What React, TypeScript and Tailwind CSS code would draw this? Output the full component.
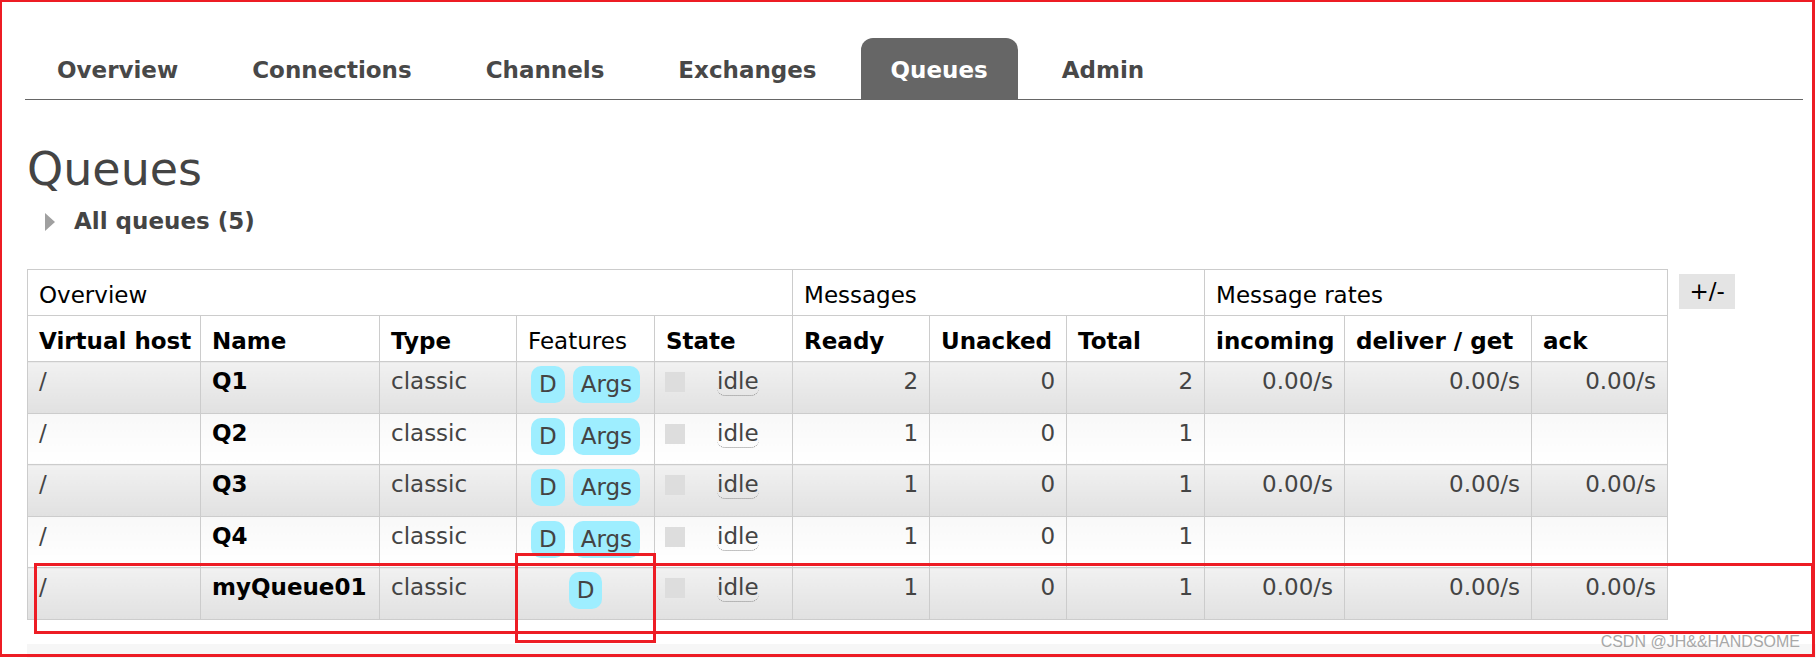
import React from "react";

const tabs = ["Overview", "Connections", "Channels", "Exchanges", "Queues", "Admin"];

type Fila = {
  nome: string;
  args: boolean;
  ready: number;
  unacked: number;
  total: number;
  taxas: boolean;
};

const filas: Fila[] = [
  { nome: "Q1", args: true, ready: 2, unacked: 0, total: 2, taxas: true },
  { nome: "Q2", args: true, ready: 1, unacked: 0, total: 1, taxas: false },
  { nome: "Q3", args: true, ready: 1, unacked: 0, total: 1, taxas: true },
  { nome: "Q4", args: true, ready: 1, unacked: 0, total: 1, taxas: false },
  { nome: "myQueue01", args: false, ready: 1, unacked: 0, total: 1, taxas: true },
];

const larguras = [173, 179, 137, 138, 138, 137, 137, 138, 140, 187, 136];

function Badge({ children }: { children: React.ReactNode }) {
  return (
    <span className="inline-flex h-[37px] items-center rounded-[10px] bg-[#9eeeff] px-[8px] text-[#444]">
      {children}
    </span>
  );
}

export default function App() {
  const celula = "border border-[#cccccc] px-[11px]";
  const cab = `${celula} pt-[6px] pb-0`;

  return (
    <div className="relative h-[658px] w-[1816px] overflow-hidden bg-white font-['DejaVu_Sans',Verdana,sans-serif] text-[23px] leading-[27px] text-[#444]">
      {/* navegação */}
      <div className="ml-[25px] mr-[13px] mt-[38px] flex gap-[14px] border-b border-[#666] pl-[2px]">
        {tabs.map((t) => (
          <div
            key={t}
            className={`flex h-[61px] items-center px-[30px] pt-[4px] font-bold ${
              t === "Queues" ? "rounded-t-[12px] bg-[#666] text-white" : "text-[#484848]"
            }`}
          >
            {t}
          </div>
        ))}
      </div>

      <div className="pl-[27px]">
        <h1 className="mt-[42px] text-[46px] leading-[54px] font-normal text-[#444]">Queues</h1>

        <div className="mt-[12px] flex items-center">
          <span className="ml-[18px] h-0 w-0 border-y-[9px] border-l-[10px] border-y-transparent border-l-[#a0a0a0]" />
          <span className="ml-[19px] font-bold text-[#444]">All queues (5)</span>
        </div>

        <div className="mt-[34px] flex items-start">
          <table className="w-[1640px] table-fixed border-collapse">
            <colgroup>
              {larguras.map((w, i) => (
                <col key={i} style={{ width: w }} />
              ))}
            </colgroup>
            <thead>
              <tr className="h-[46px] text-left text-black">
                <th colSpan={5} className={`${cab} font-normal`}>Overview</th>
                <th colSpan={3} className={`${cab} font-normal`}>Messages</th>
                <th colSpan={3} className={`${cab} font-normal`}>Message rates</th>
              </tr>
              <tr className="h-[46px] text-left text-black">
                <th className={`${cab} whitespace-nowrap font-bold`}>Virtual host</th>
                <th className={`${cab} font-bold`}>Name</th>
                <th className={`${cab} font-bold`}>Type</th>
                <th className={`${cab} font-normal`}>Features</th>
                <th className={`${cab} font-bold`}>State</th>
                <th className={`${cab} font-bold`}>Ready</th>
                <th className={`${cab} font-bold`}>Unacked</th>
                <th className={`${cab} font-bold`}>Total</th>
                <th className={`${cab} font-bold`}>incoming</th>
                <th className={`${cab} whitespace-nowrap font-bold`}>deliver / get</th>
                <th className={`${cab} font-bold`}>ack</th>
              </tr>
            </thead>
            <tbody>
              {filas.map((f, i) => {
                const fundo =
                  i % 2 === 0
                    ? "bg-gradient-to-b from-[#f1f1f1] to-[#e1e1e1]"
                    : "bg-gradient-to-b from-[#f8f8f8] to-[#ffffff]";
                const td = `${celula} ${fundo} align-top pt-[6px]`;
                return (
                  <tr key={f.nome} className="h-[51.5px]">
                    <td className={td}>/</td>
                    <td className={`${td} font-bold text-black`}>{f.nome}</td>
                    <td className={td}>classic</td>
                    <td className={`${celula} ${fundo} align-top pt-[4px] text-center`}>
                      <div className="flex justify-center gap-[8px]">
                        <Badge>D</Badge>
                        {f.args && <Badge>Args</Badge>}
                      </div>
                    </td>
                    <td className={`${celula} ${fundo} align-top pl-[10px] pt-[10px]`}>
                      <div className="flex items-start">
                        <span className="h-[20px] w-[20px] shrink-0 bg-[#dddddd]" />
                        <span className="-mt-[4px] ml-[32px] rounded-b-[8px] border-b border-dotted border-[#888] leading-[27px]">
                          idle
                        </span>
                      </div>
                    </td>
                    <td className={`${td} text-right`}>{f.ready}</td>
                    <td className={`${td} text-right`}>{f.unacked}</td>
                    <td className={`${td} text-right`}>{f.total}</td>
                    <td className={`${td} text-right`}>{f.taxas ? "0.00/s" : ""}</td>
                    <td className={`${td} text-right`}>{f.taxas ? "0.00/s" : ""}</td>
                    <td className={`${td} text-right`}>{f.taxas ? "0.00/s" : ""}</td>
                  </tr>
                );
              })}
            </tbody>
          </table>

          <button className="ml-[11px] mt-[5px] h-[35px] w-[56px] bg-[#e4e4e4] text-black">+/-</button>
        </div>

        <div className="mt-[24px] h-[14px] bg-[#f6f6f6]" />
      </div>

      {/* marcações vermelhas por cima da captura */}
      <div className="pointer-events-none absolute left-0 top-0 h-[657px] w-[1815px] border-b-[3px] border-l-2 border-r-[3px] border-t-2 border-[#ed1c24]" />
      <div className="pointer-events-none absolute left-[34px] top-[563px] h-[71px] w-[1780px] border-[3px] border-[#ed1c24]" />
      <div className="pointer-events-none absolute left-[515px] top-[553px] h-[90px] w-[141px] border-[3px] border-[#ed1c24]" />

      <div className="absolute right-[16px] top-[633px] font-['Liberation_Sans',Arial,sans-serif] text-[16px] leading-[18px] text-[#a8a8a8]">
        CSDN @JH&amp;&amp;HANDSOME
      </div>
    </div>
  );
}
